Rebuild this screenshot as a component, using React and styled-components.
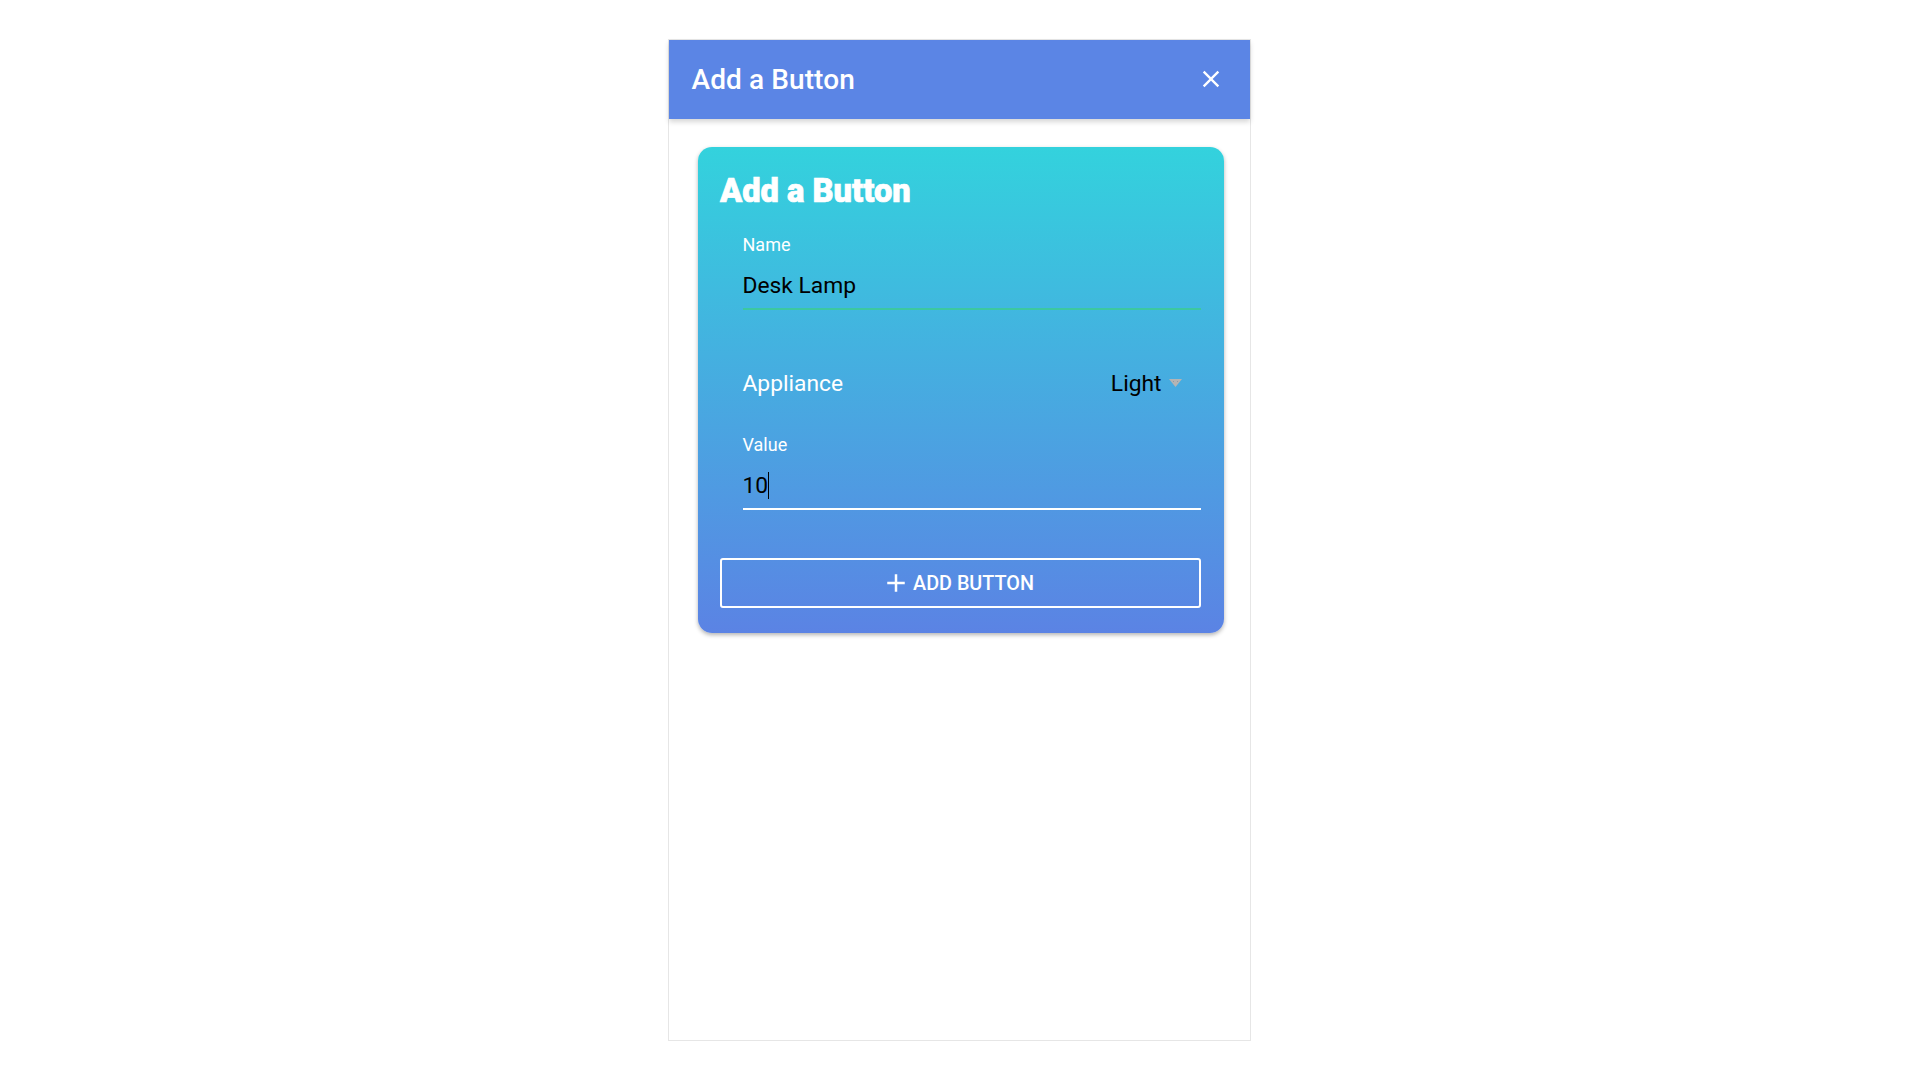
import styled, { createGlobalStyle } from "styled-components";

const GlobalStyle = createGlobalStyle`
	html, body {
		margin: 0;
		background: #fff;
		font-family: Roboto, "Liberation Sans", sans-serif;
	}
`;

const Page = styled.div`
	display: flex;
	justify-content: center;
	padding-top: 39px;
`;

const Frame = styled.div`
	width: 581px;
	height: 1000px;
	border: 1px solid #e6e6e6;
	margin-right: 2px;
	display: flex;
	flex-direction: column;
`;

const Header = styled.header`
	height: 79px;
	background: #5b85e5;
	color: #fff;
	display: flex;
	align-items: center;
	justify-content: space-between;
	padding: 0 25px 0 23px;
	box-shadow: 0 3px 5px rgba(0, 0, 0, 0.16);
`;

const HeaderTitle = styled.h1`
	margin: 0;
	font-size: 28px;
	font-weight: 500;
	letter-spacing: 0.1px;
`;

const CloseButton = styled.button`
	display: flex;
	padding: 0 0 1px;
	border: 0;
	background: none;
	color: #fff;
`;

const Card = styled.section`
	margin: 28px 26px 0 29px;
	height: 486px;
	box-sizing: border-box;
	padding: 24px 23px 0 22px;
	border-radius: 14px;
	background: linear-gradient(180deg, #33d2dd 0%, #5b83e4 100%);
	box-shadow: 0 2px 4px rgba(0, 0, 0, 0.3);
	color: #fff;
`;

const CardTitle = styled.h2`
	margin: 0 0 24px;
	font-size: 34px;
	line-height: 38px;
	font-weight: 900;
	-webkit-text-stroke: 0.7px #fff;
	transform: scaleX(0.96);
	transform-origin: left center;
`;

const Field = styled.div`
	margin-left: 23px;
`;

const FieldLabel = styled.label`
	display: block;
	font-size: 18px;
	line-height: 24px;
	margin-bottom: 11px;
`;

const FieldValue = styled.div`
	height: 42px;
	font-size: 22.8px;
	line-height: 36px;
	color: #000;
	border-bottom: 2px solid ${(props) => props.$line};
	box-sizing: border-box;
`;

const Caret = styled.span`
	display: inline-block;
	width: 1px;
	height: 27px;
	background: #000;
	vertical-align: -6px;
`;

const SelectRow = styled.div`
	margin: 58px 0 0 23px;
	display: flex;
	align-items: center;
	justify-content: space-between;
	padding-right: 19px;
	height: 30px;
`;

const SelectLabel = styled.span`
	font-size: 22.8px;
`;

const SelectValue = styled.span`
	display: flex;
	align-items: center;
	gap: 7px;
	font-size: 22.8px;
	color: #000;
`;

const ValueField = styled(Field)`
	margin-top: 35px;
`;

const AddButton = styled.button`
	margin-top: 48px;
	width: 100%;
	height: 50px;
	padding: 0 5px 0 0;
	display: flex;
	align-items: center;
	justify-content: center;
	gap: 2px;
	background: none;
	border: 2px solid #fff;
	border-radius: 3px;
	color: #fff;
	font-family: inherit;
	font-size: 19.8px;
	font-weight: 500;
	text-transform: uppercase;
`;

export default function App() {
	return (
		<Page>
			<GlobalStyle />
			<Frame>
				<Header>
					<HeaderTitle>Add a Button</HeaderTitle>
					<CloseButton aria-label="Close">
						<svg width="28" height="28" viewBox="0 0 24 24" fill="currentColor">
							<path d="M19 6.41 17.59 5 12 10.59 6.41 5 5 6.41 10.59 12 5 17.59 6.41 19 12 13.41 17.59 19 19 17.59 13.41 12z" />
						</svg>
					</CloseButton>
				</Header>
				<Card>
					<CardTitle>Add a Button</CardTitle>
					<Field>
						<FieldLabel>Name</FieldLabel>
						<FieldValue $line="#3cc8a0">Desk Lamp</FieldValue>
					</Field>
					<SelectRow>
						<SelectLabel>Appliance</SelectLabel>
						<SelectValue>
							Light
							<svg width="13" height="8" viewBox="0 0 13 8">
								<polygon points="0,0 13,0 6.5,8" fill="#b4b4b4" />
								<rect x="4" y="2" width="1" height="1" fill="#8f99a6" />
								<rect x="8" y="2" width="1" height="1" fill="#8f99a6" />
							</svg>
						</SelectValue>
					</SelectRow>
					<ValueField>
						<FieldLabel>Value</FieldLabel>
						<FieldValue $line="#fff">
							10
							<Caret />
						</FieldValue>
					</ValueField>
					<AddButton>
						<svg width="30" height="30" viewBox="0 0 24 24" fill="currentColor">
							<path d="M19 13h-6v6h-2v-6H5v-2h6V5h2v6h6v2z" />
						</svg>
						Add Button
					</AddButton>
				</Card>
			</Frame>
		</Page>
	);
}
